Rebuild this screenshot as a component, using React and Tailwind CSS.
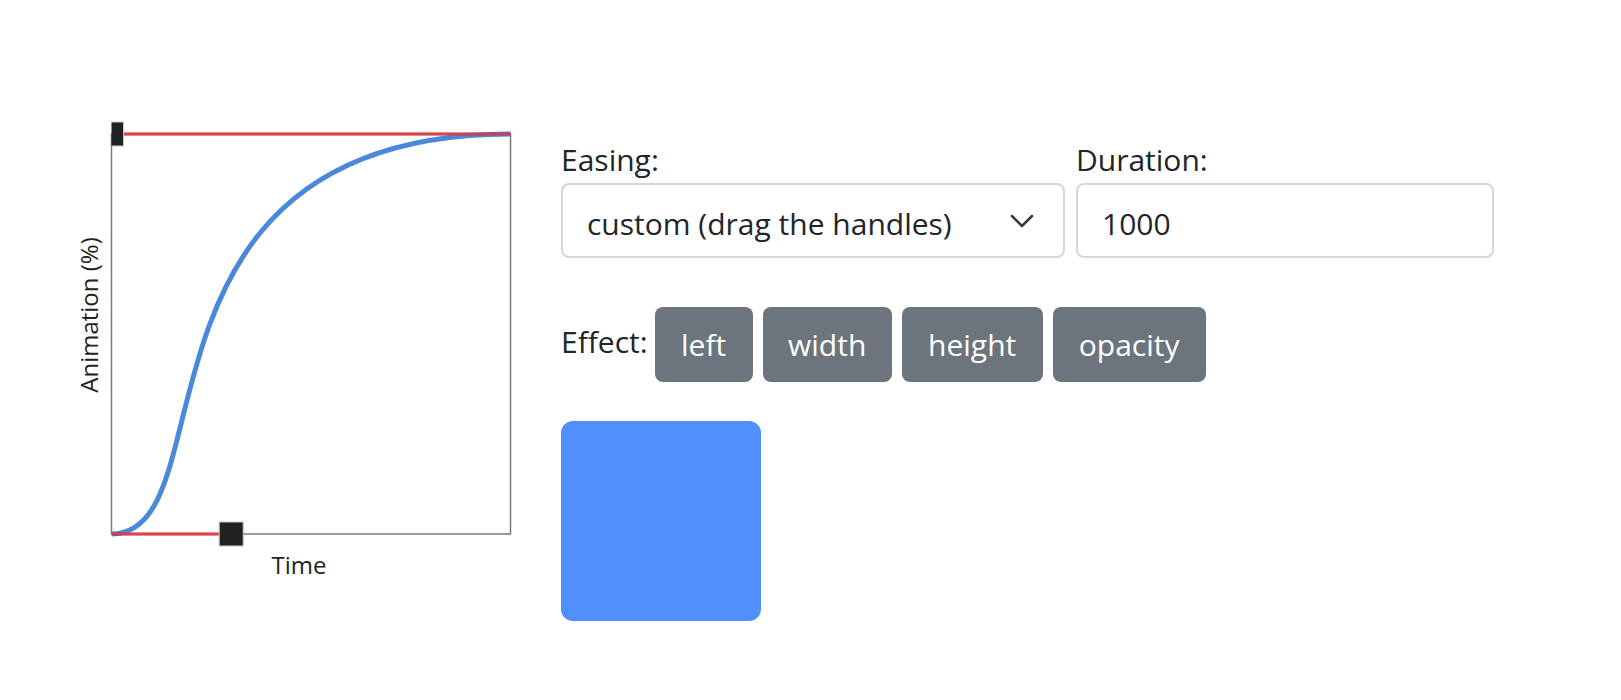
import { useState } from "react";

// cubic-bezier(0.3, 0, 0, 1) drawn in a 399x400 box
const PLOT = { x: 50.5, y: 34, w: 399, h: 400 };

function px(t) {
  return PLOT.x + t * PLOT.w;
}

function py(v) {
  return PLOT.y + (1 - v) * PLOT.h;
}

function EasingChart({ p1, p2 }) {
  const start = [px(0), py(0)];
  const end = [px(1), py(1)];
  const c1 = [px(p1[0]), py(p1[1])];
  const c2 = [px(p2[0]), py(p2[1])];

  return (
    <svg width="470" height="490" className="shrink-0">
      <defs>
        <clipPath id="plot-clip">
          <rect x={PLOT.x} y="0" width="420" height="490" />
        </clipPath>
      </defs>

      <rect
        x={PLOT.x}
        y={PLOT.y}
        width={PLOT.w}
        height={PLOT.h}
        fill="none"
        stroke="#7a7a7a"
        strokeWidth="1.5"
      />

      <g clipPath="url(#plot-clip)">
        <path
          d={`M${start[0]},${start[1]} C${c1[0]},${c1[1]} ${c2[0]},${c2[1]} ${end[0]},${end[1]}`}
          fill="none"
          stroke="#4a88dc"
          strokeWidth="5"
        />
        <line x1={start[0]} y1={start[1]} x2={c1[0]} y2={c1[1]} stroke="#e0303c" strokeOpacity="0.75" strokeWidth="3.5" />
        <line x1={end[0]} y1={end[1]} x2={c2[0]} y2={c2[1]} stroke="#e0303c" strokeOpacity="0.75" strokeWidth="3.5" />

        <rect x={c1[0] - 12} y={c1[1] - 12} width="24" height="24" fill="#222" stroke="#c8c8c8" strokeWidth="1" />
        <rect x={c2[0] - 12} y={c2[1] - 12} width="24" height="24" fill="#222" stroke="#c8c8c8" strokeWidth="1" />
      </g>

      <text
        transform="translate(37, 215) rotate(-90)"
        textAnchor="middle"
        fontSize="24"
        fill="#222"
        fontFamily="'Open Sans', sans-serif"
      >
        Animation (%)
      </text>
      <text x="238" y="474" textAnchor="middle" fontSize="24" fill="#222" fontFamily="'Open Sans', sans-serif">
        Time
      </text>
    </svg>
  );
}

const effects = [
  { name: "left", width: "w-[98px]" },
  { name: "width", width: "w-[129px]" },
  { name: "height", width: "w-[141px]" },
  { name: "opacity", width: "w-[153px]" }
];

export default function App() {
  const [duration, setDuration] = useState("1000");

  return (
    <div className="flex min-h-[700px] bg-white pl-[61px] pt-[100px] font-['Open_Sans',sans-serif] text-[#212529]">
      <EasingChart p1={[0.3, 0]} p2={[0, 1]} />

      <div className="ml-[30px] mt-[37px] flex flex-col">
        <div className="flex gap-[11px]">
          <div className="w-[504px]">
            <label className="mb-[1px] block text-[30px] leading-[45px]">Easing:</label>
            <div className="relative flex h-[75px] items-center rounded-[8px] border-2 border-[#d3d8de] px-[24px] pt-[5px] text-[30px] leading-[45px]">
              custom (drag the handles)
              <svg
                width="24"
                height="14"
                viewBox="0 0 24 14"
                className="absolute right-[29px] top-1/2 -translate-y-1/2"
              >
                <path d="M2 2l10 10 10-10" fill="none" stroke="#343a40" strokeWidth="2.5" strokeLinecap="round" strokeLinejoin="round" />
              </svg>
            </div>
          </div>

          <div className="w-[418px]">
            <label className="mb-[1px] block text-[30px] leading-[45px]">Duration:</label>
            <input
              value={duration}
              onChange={(e) => setDuration(e.target.value)}
              className="h-[75px] w-full rounded-[8px] border-2 border-[#d3d8de] px-[24px] pt-[5px] text-[30px] leading-[45px] text-[#212529] outline-none"
            />
          </div>
        </div>

        <div className="mt-[49px] flex items-start">
          <span className="mr-[7px] mt-[12px] text-[30px] leading-[45px]">Effect:</span>
          <div className="flex gap-[10px]">
            {effects.map((effect) => (
              <button
                key={effect.name}
                className={`${effect.width} h-[75px] rounded-[8px] bg-[#6c757d] text-[30px] leading-[45px] text-white`}
              >
                {effect.name}
              </button>
            ))}
          </div>
        </div>

        <div className="mt-[39px] h-[200px] w-[200px] rounded-[12px] bg-[#4f8ffe]" />
      </div>
    </div>
  );
}
